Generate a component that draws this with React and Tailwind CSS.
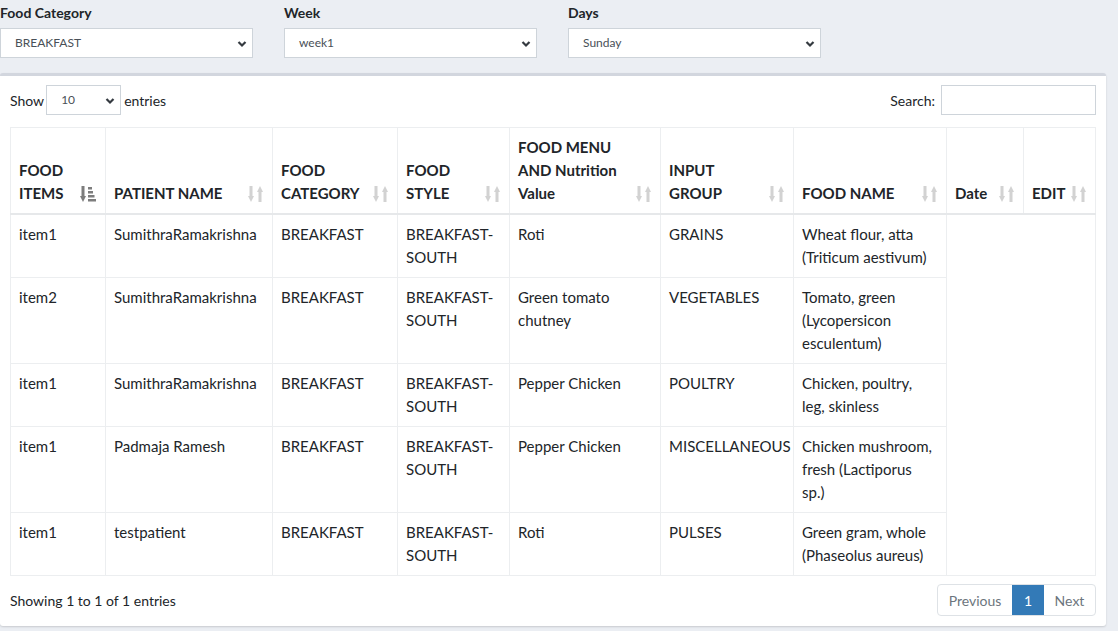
import React from "react";

const cols = [
  { w: 95, label: ["FOOD", "ITEMS"], active: true },
  { w: 167, label: ["PATIENT NAME"] },
  { w: 125, label: ["FOOD", "CATEGORY"] },
  { w: 112, label: ["FOOD", "STYLE"] },
  { w: 151, label: ["FOOD MENU", "AND Nutrition", "Value"] },
  { w: 133, label: ["INPUT", "GROUP"] },
  { w: 153, label: ["FOOD NAME"] },
  { w: 77, label: ["Date"] },
  { w: 72, label: ["EDIT"] },
];

const rows = [
  [["item1"], ["SumithraRamakrishna"], ["BREAKFAST"], ["BREAKFAST-", "SOUTH"], ["Roti"], ["GRAINS"], ["Wheat flour, atta", "(Triticum aestivum)"]],
  [["item2"], ["SumithraRamakrishna"], ["BREAKFAST"], ["BREAKFAST-", "SOUTH"], ["Green tomato", "chutney"], ["VEGETABLES"], ["Tomato, green", "(Lycopersicon", "esculentum)"]],
  [["item1"], ["SumithraRamakrishna"], ["BREAKFAST"], ["BREAKFAST-", "SOUTH"], ["Pepper Chicken"], ["POULTRY"], ["Chicken, poultry,", "leg, skinless"]],
  [["item1"], ["Padmaja Ramesh"], ["BREAKFAST"], ["BREAKFAST-", "SOUTH"], ["Pepper Chicken"], ["MISCELLANEOUS"], ["Chicken mushroom,", "fresh (Lactiporus", "sp.)"]],
  [["item1"], ["testpatient"], ["BREAKFAST"], ["BREAKFAST-", "SOUTH"], ["Roti"], ["PULSES"], ["Green gram, whole", "(Phaseolus aureus)"]],
];

function SortIcon({ active }) {
  if (active) {
    return (
      <svg width="16" height="16" viewBox="0 0 16 16" fill="#7d7d7d">
        <rect x="1.5" y="0" width="3" height="11" />
        <polygon points="0,10 6,10 3,16" />
        <rect x="8" y="1" width="4" height="2.5" />
        <rect x="8" y="5" width="5" height="2.5" />
        <rect x="8" y="9" width="6.5" height="2.5" />
        <rect x="8" y="13" width="8" height="2.5" />
      </svg>
    );
  }
  return (
    <svg width="15" height="16" viewBox="0 0 15 16" fill="#d2d2d2">
      <rect x="1.5" y="0" width="3" height="11" />
      <polygon points="0,10 6,10 3,16" />
      <rect x="10.5" y="5" width="3" height="11" />
      <polygon points="9,6 15,6 12,0" />
    </svg>
  );
}

function Chevron() {
  return (
    <svg width="10" height="8" viewBox="0 0 10 8" fill="none" stroke="#343a40" strokeWidth="2.2">
      <path d="M1.5 2 L5 5.5 L8.5 2" />
    </svg>
  );
}

function Select({ label, value }) {
  return (
    <div className="w-[284px]">
      <div className="text-[14px] font-bold text-[#212529] leading-[18px] mt-[4px] mb-[6px]">{label}</div>
      <div className="relative w-[253px] h-[30px] bg-white border border-[#ced4da] flex items-center pl-[14px] text-[12px] text-[#495057]">
        {value}
        <span className="absolute right-[5px] top-[11px]">
          <Chevron />
        </span>
      </div>
    </div>
  );
}

export default function App() {
  return (
    <div className="w-[1118px] h-[631px] bg-[#ebeef3] font-['Source_Sans_Pro','Lato',sans-serif] text-[#212529] overflow-hidden">
      <div className="w-[1106px]">
        <div className="flex">
          <Select label="Food Category" value="BREAKFAST" />
          <Select label="Week" value="week1" />
          <Select label="Days" value="Sunday" />
        </div>

        <div className="mt-[15px] bg-white border-t-[3px] border-[#d2d6de] rounded-[3px] shadow-[0_1px_2px_rgba(0,0,0,0.15)] px-[10px] pt-[9px] pb-[10px]">
          <div className="flex items-center justify-between h-[30px] text-[14px]">
            <div className="flex items-center gap-[2px]">
              <span>Show</span>
              <div className="relative w-[75px] h-[30px] border border-[#ced4da] flex items-center pl-[14px] text-[12px] text-[#495057]">
                10
                <span className="absolute right-[5px] top-[11px]">
                  <Chevron />
                </span>
              </div>
              <span className="ml-[1px]">entries</span>
            </div>
            <div className="flex items-center gap-[6px]">
              <span>Search:</span>
              <div className="w-[155px] h-[30px] border border-[#ced4da]"></div>
            </div>
          </div>

          <table className="mt-[12px] table-fixed border-collapse border border-[#eceef0] w-[1085px]">
            <colgroup>
              {cols.map((c, i) => (
                <col key={i} style={{ width: c.w }} />
              ))}
            </colgroup>
            <thead>
              <tr>
                {cols.map((c, i) => (
                  <th
                    key={i}
                    className="relative align-bottom text-left font-bold text-[15px] leading-[23px] px-[8px] pt-[8px] pb-[8px] border border-[#eceef0] border-b-2 border-b-[#e6e8ea]"
                  >
                    {c.label.map((l, j) => (
                      <div key={j} className="whitespace-nowrap">{l}</div>
                    ))}
                    <span className="absolute right-[9px] bottom-[11px] flex">
                      <SortIcon active={c.active} />
                    </span>
                  </th>
                ))}
              </tr>
            </thead>
            <tbody>
              {rows.map((r, i) => (
                <tr key={i}>
                  {r.map((cell, j) => (
                    <td key={j} className="align-top text-[15px] leading-[23px] px-[8px] py-[8px] border border-[#eceef0]">
                      {cell.map((l, k) => (
                        <div key={k} className="whitespace-nowrap">{l}</div>
                      ))}
                    </td>
                  ))}
                </tr>
              ))}
            </tbody>
          </table>

          <div className="flex items-center justify-between mt-[8px] text-[14px]">
            <span>Showing 1 to 1 of 1 entries</span>
            <div className="flex h-[32px] border border-[#dee2e6] rounded-[4px] overflow-hidden">
              <span className="flex items-center justify-center w-[74px] text-[#6c757d]">Previous</span>
              <span className="flex items-center justify-center w-[32px] bg-[#337ab7] text-white">1</span>
              <span className="flex items-center justify-center w-[51px] text-[#6c757d]">Next</span>
            </div>
          </div>
        </div>
      </div>
    </div>
  );
}
